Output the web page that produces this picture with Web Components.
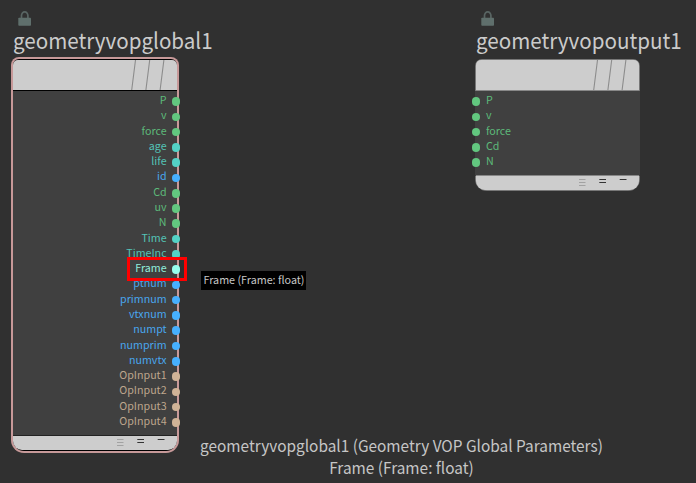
<!DOCTYPE html>
<html lang="en"><head><meta charset="utf-8"><title>VOP network</title>
<style>html,body{margin:0;width:696px;height:483px;overflow:hidden;background:#303030}</style></head>
<body><vop-canvas></vop-canvas>
<script>
const define=(name,html)=>{
  const t=document.createElement('template');t.innerHTML=html;
  customElements.define(name,class extends HTMLElement{
    constructor(){super();this.attachShadow({mode:'open'}).append(t.content.cloneNode(true))}
  });
};
define('lock-icon',`<style>:host{display:block;width:14px;height:15px}svg{display:block}</style>
<svg width="14" height="15" viewBox="0 0 14 15"><path d="M3.5 8V4.6a3.2 3.7 0 0 1 6.4 0V8" fill="none" stroke="#596563" stroke-width="1.7"/><rect x=".3" y="6.8" width="12.7" height="8" rx=".8" fill="#5f6f6c"/></svg>`);
define('node-port',`<style>:host{display:flex;align-items:center;height:15.285px;font-size:10.7px;line-height:15px;color:var(--c)}
span{flex:1;text-align:right;white-space:nowrap;padding-bottom:3px}i{width:8.6px;height:8.6px;border-radius:50%;background:var(--dot);margin:1px -3.2px 0 5px}
:host([side=in]){flex-direction:row-reverse}:host([side=in]) span{text-align:left}:host([side=in]) i{margin:1px 5.7px 0 -4.3px}</style><span><slot></slot></span><i></i>`);
define('node-head',`<style>:host{display:block;height:30px;background:#cdcdcd;border-radius:5px 5px 0 0;overflow:hidden}svg{display:block;margin-left:auto}</style>
<svg width="48" height="30"><path d="M6.5 0L2.7 30M20.7 0L16.9 30M34.9 0L31.1 30" stroke="#8c8c8c" stroke-width="1.1" fill="none"/></svg>`);
define('node-foot',`<style>:host{display:flex;justify-content:flex-end;height:14px;background:#cdcdcd;border-radius:0 0 9px 9px}svg{display:block}</style>
<svg width="64" height="14"><g><path d="M4 3.5h6.5M4 6.5h6.5M4 9.5h6.5" stroke="#a2a2a2" stroke-width="1.2"/><path d="M24.3 3.5H31M24.3 6.5H31M44.7 3.5h6.8" stroke="#333" stroke-width="1.2"/></g></svg>`);
define('vop-node',`<style>:host{position:absolute;display:block}
lock-icon{margin-left:5px}h2{font:400 20.6px/28px "Noto Sans CJK SC",sans-serif;margin:0;color:#cbcbcb;white-space:nowrap;height:28px;transform:scaleY(1.06);transform-origin:0 17px}
.shell{background:#000;border-radius:6px 6px 11px 11px;margin-top:5px}
.ports{background:#404040;margin-top:1px;padding-top:2.4px;box-sizing:border-box}
:host([selected]) .shell{padding:1px 0;box-shadow:0 0 0 2px #c79999;background:#000}
:host([selected]) .ports{height:345px;border-bottom:1px solid #222}
:host(:not([selected])) .shell{box-shadow:0 0 0 1px #777;background:#888;margin-top:6px}
:host(:not([selected])) .ports{height:85px;border-bottom:1px solid #888;box-shadow:-1px 0 #404040,1px 0 #404040}
:host(:not([selected])) svg{margin-right:-1px}
</style><lock-icon></lock-icon><h2><slot name="title"></slot></h2><div class="shell"><node-head></node-head><div class="ports"><slot></slot></div><node-foot></node-foot></div>`);
define('hint-label',`<style>:host{position:absolute;left:201px;top:271px;width:105px;height:19px;background:#000;color:#c6c6c6;font-size:10.75px;line-height:18px;text-align:center;white-space:nowrap;text-indent:1px}</style><slot></slot>`);
define('status-text',`<style>:host{position:absolute;left:200px;top:434px;width:403px;text-align:center;color:#c6c6c6;font-size:15.4px;line-height:22px;white-space:nowrap}::slotted(div){transform:scaleY(1.06)}</style><slot></slot>`);
const G=['#5dba7a','#62c77f'],T=['#54c3b7','#53d2c6'],B=['#49a7ef','#46b0ff'],O=['#bea68d','#d0b397'],F=['#90eedd','#96ffee'];
const port=(n,[c,d],s='out')=>`<node-port side="${s}" style="--c:${c};--dot:${d}">${n}</node-port>`;
const all=(s,c,side)=>s.split(' ').map(n=>port(n,c,side)).join('');
define('vop-canvas',`<style>:host{display:block;position:relative;width:696px;height:483px;background:#303030;font-family:"Noto Sans CJK SC",sans-serif;overflow:hidden}
.frame{position:absolute;left:127px;top:257px;width:60px;height:24px;box-sizing:border-box;border:3px solid #f00}
.n1{left:13px;top:11px;width:164px}.n2{left:476px;top:11px;width:162.5px}</style>
<vop-node class="n1" selected><span slot="title">geometryvopglobal1</span>${all('P v force',G)+all('age life',T)+all('id',B)+all('Cd uv N',G)+all('Time TimeInc',T)+all('Frame',F)+all('ptnum primnum vtxnum numpt numprim numvtx',B)+all('OpInput1 OpInput2 OpInput3 OpInput4',O)}</vop-node>
<vop-node class="n2"><span slot="title">geometryvopoutput1</span>${all('P v force Cd N',G,'in')}</vop-node>
<div class="frame"></div><hint-label>Frame (Frame: float)</hint-label>
<status-text><div>geometryvopglobal1 (Geometry VOP Global Parameters)</div><div>Frame (Frame: float)</div></status-text>`);
</script></body></html>
